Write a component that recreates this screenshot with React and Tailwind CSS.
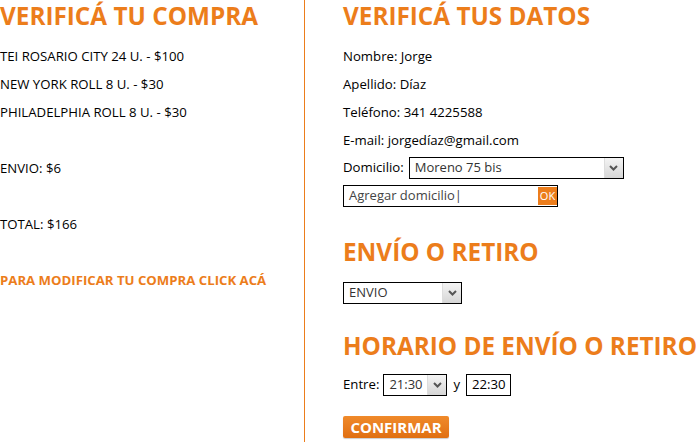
import React from "react";

const Chevron = () => (
  <svg width="9" height="6" viewBox="0 0 9 6">
    <path d="M1 1 L4.5 4.5 L8 1" fill="none" stroke="#555" strokeWidth="2" />
  </svg>
);

const FakeSelect = ({ value, w, arrowW = "w-[19px]" }) => (
  <div className={`flex h-[22px] ${w} items-stretch border border-black bg-white`}>
    <div className="flex flex-1 items-center pl-[5px] text-[13px] text-[#333]">{value}</div>
    <div className={`flex ${arrowW} items-center justify-center border-l border-[#ddd] bg-gradient-to-b from-[#f4f4f4] to-[#d6d6d6]`}>
      <Chevron />
    </div>
  </div>
);

export default function App() {
  const orange = "text-[#ec7d1b]";
  return (
    <div
      className="flex h-[442px] w-[696px] overflow-hidden bg-white text-[13.2px] text-black"
      style={{ fontFamily: '"Open Sans", sans-serif' }}
    >
      <div className="w-[305px] shrink-0 border-r border-[#ec7d1b]">
        <h2 className={`mb-[10px] whitespace-nowrap text-[24.3px] font-bold leading-[32px] ${orange}`}>VERIFICÁ TU COMPRA</h2>
        <p className="leading-[28px]">TEI ROSARIO CITY 24 U. - $100</p>
        <p className="leading-[28px]">NEW YORK ROLL 8 U. - $30</p>
        <p className="leading-[28px]">PHILADELPHIA ROLL 8 U. - $30</p>
        <p className="h-[28px]"></p>
        <p className="leading-[28px]">ENVIO: $6</p>
        <p className="h-[28px]"></p>
        <p className="leading-[28px]">TOTAL: $166</p>
        <p className="h-[28px]"></p>
        <p className={`text-[13.2px] font-bold leading-[28px] ${orange}`}>PARA MODIFICAR TU COMPRA CLICK ACÁ</p>
      </div>
      <div className="min-w-0 flex-1 pl-[38px]">
        <h2 className={`mb-[10px] whitespace-nowrap text-[24.3px] font-bold leading-[32px] ${orange}`}>VERIFICÁ TUS DATOS</h2>
        <p className="leading-[28px]">Nombre: Jorge</p>
        <p className="leading-[28px]">Apellido: Díaz</p>
        <p className="leading-[28px]">Teléfono: 341 4225588</p>
        <p className="leading-[28px]">E-mail: jorgedíaz@gmail.com</p>
        <div className="flex h-[28px] items-center gap-[5px]">
          <span>Domicilio:</span>
          <FakeSelect value="Moreno 75 bis" w="w-[215px]" />
        </div>
        <div className="flex h-[28px] items-center">
          <div className="flex h-[22px] w-[215px] items-center border border-black bg-white pl-[5px]">
            <span className="flex-1 text-[13px] text-[#444]">Agregar domicilio|</span>
            <span className="flex h-[18px] w-[19px] items-center justify-center bg-[#ec7d1b] text-[11px] text-white">OK</span>
          </div>
        </div>
        <h2 className={`mt-[26px] mb-[11px] whitespace-nowrap text-[24.3px] font-bold leading-[32px] ${orange}`}>ENVÍO O RETIRO</h2>
        <div className="flex h-[28px] items-center">
          <FakeSelect value="ENVIO" w="w-[119px]" />
        </div>
        <h2 className={`mt-[23px] mb-[9px] whitespace-nowrap text-[24.3px] font-bold leading-[32px] ${orange}`}>HORARIO DE ENVÍO O RETIRO</h2>
        <div className="flex h-[28px] items-center gap-[4px]">
          <span>Entre:</span>
          <FakeSelect value="21:30" w="w-[64px]" />
          <span className="mx-[2px]">y</span>
          <div className="flex h-[22px] w-[45px] items-center border border-black bg-white pl-[5px]">22:30</div>
        </div>
        <div className="mt-[17px]">
          <button className="h-[22px] w-[106px] rounded-[2px] bg-gradient-to-b from-[#f08a2a] to-[#e06f10] text-[15px] font-bold leading-[22px] text-white shadow-[0_1px_1px_rgba(0,0,0,0.2)]">
            CONFIRMAR
          </button>
        </div>
      </div>
    </div>
  );
}
